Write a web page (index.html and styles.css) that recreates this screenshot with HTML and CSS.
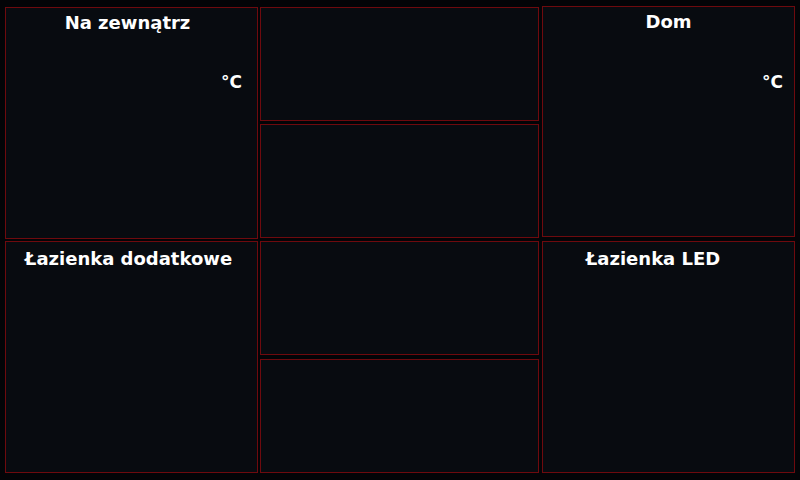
FILE: index.html
```html
<!DOCTYPE html>
<html lang="pl">
<head>
<meta charset="utf-8">
<link rel="stylesheet" href="styles.css">
</head>
<body>
<div class="screen">
  <div class="col col-left">
    <div class="panel p-outside">
      <div class="title">Na zewnątrz</div>
      <div class="unit">°C</div>
    </div>
    <div class="panel p-bath">
      <div class="title">Łazienka dodatkowe</div>
    </div>
  </div>
  <div class="col col-mid">
    <div class="panel m1"></div>
    <div class="panel m2"></div>
    <div class="panel m3"></div>
    <div class="panel m4"></div>
  </div>
  <div class="col col-right">
    <div class="panel p-home">
      <div class="title">Dom</div>
      <div class="unit">°C</div>
    </div>
    <div class="panel p-led">
      <div class="title">Łazienka LED</div>
    </div>
  </div>
</div>
</body>
</html>
```
FILE: styles.css
```css
html, body {
  margin: 0;
  padding: 0;
  background: #030407;
  width: 800px;
  height: 480px;
  overflow: hidden;
  font-family: "DejaVu Sans", sans-serif;
  color: #ffffff;
}
.screen {
  display: flex;
  align-items: flex-start;
  padding-left: 5px;
}
.col {
  display: flex;
  flex-direction: column;
}
.panel {
  box-sizing: border-box;
  background: #080b10;
  border: 1px solid #6e0a0e;
}
.col-left {
  width: 253px;
  padding-top: 7px;
  gap: 2px;
}
.col-left .panel { height: 232px; }
.col-mid {
  width: 279px;
  margin-left: 2px;
  padding-top: 7px;
}
.m1 { height: 114px; }
.m2 { height: 114px; margin-top: 3px; }
.m3 { height: 114px; margin-top: 3px; }
.m4 { height: 114px; margin-top: 4px; }
.col-right {
  width: 253px;
  margin-left: 3px;
  padding-top: 6px;
}
.p-home { height: 231px; }
.p-led { height: 232px; margin-top: 4px; }
.title {
  font-weight: bold;
  font-size: 18px;
  line-height: 20px;
  text-align: center;
  padding-top: 5px;
}
.p-outside .title { padding-right: 8px; }
.p-bath .title { padding-top: 7px; padding-right: 6px; }
.p-led .title { padding-top: 7px; padding-right: 31px; }
.unit {
  font-weight: bold;
  font-size: 17px;
  line-height: 20px;
  text-align: right;
  margin-top: 39px;
}
.p-outside .unit { padding-right: 15px; }
.p-home .unit { padding-right: 11px; margin-top: 40px; }
```
